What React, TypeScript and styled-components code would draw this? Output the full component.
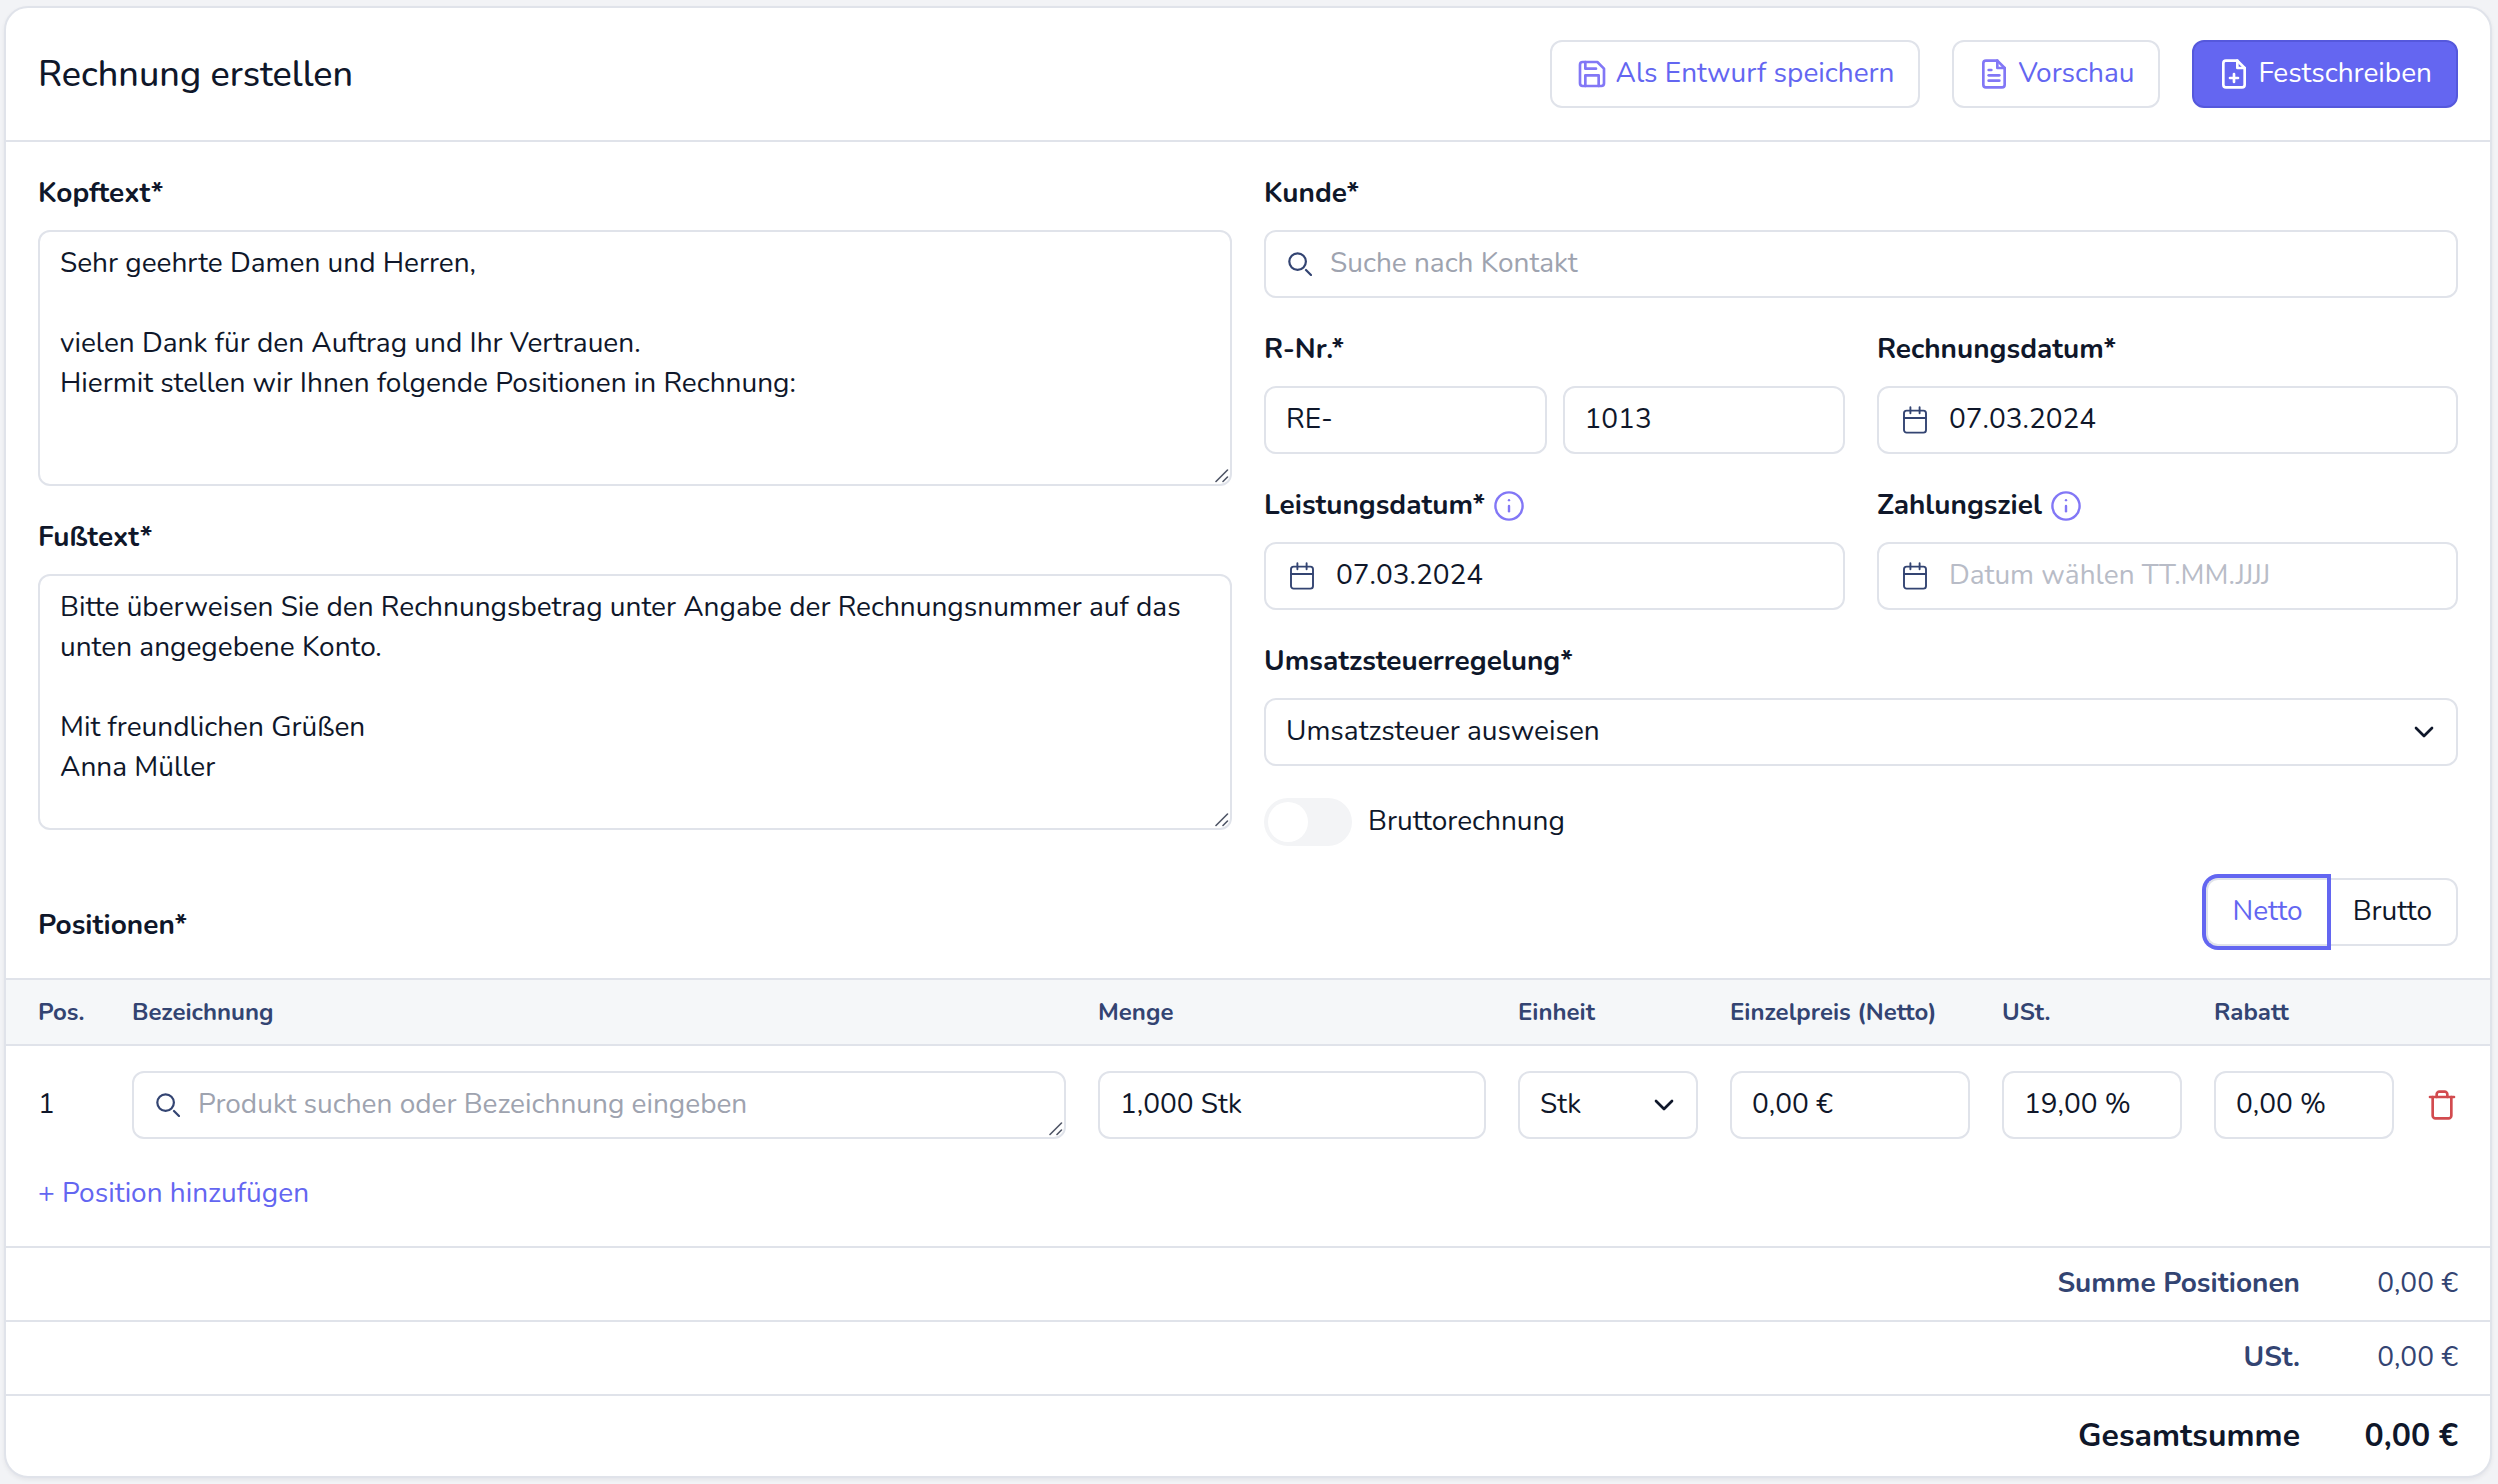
import React, { useState } from "react";
import styled, { createGlobalStyle, css } from "styled-components";

const ink = "#0f172a";
const navy = "#334472";
const line = "#e0e3ea";
const brand = "#6366f1";
const violet = "#8277f6";

const GlobalStyle = createGlobalStyle`
  *, *::before, *::after { box-sizing: border-box; }
  body {
    margin: 0;
    background: #f2f3f6;
    color: ${ink};
    font-family: Nunito, Lato, "Open Sans", sans-serif;
    font-size: 28px;
    line-height: 40px;
  }
  button, input, textarea, select { font: inherit; color: inherit; }
`;

/* ---------- Icons ---------- */

const Svg = styled.svg`
  display: block;
  flex: none;
  fill: none;
  stroke: currentColor;
  stroke-linecap: round;
  stroke-linejoin: round;
`;

const Icon24 = ({ children, stroke = 2 }: { children: React.ReactNode; stroke?: number }) => (
  <Svg width="32" height="32" viewBox="0 0 24 24" strokeWidth={stroke} aria-hidden="true">
    {children}
  </Svg>
);

const SaveIcon = () => (
  <Icon24>
    <path d="M19 21H5a2 2 0 0 1-2-2V5a2 2 0 0 1 2-2h11l5 5v11a2 2 0 0 1-2 2z" />
    <path d="M17 21v-8H7v8" />
    <path d="M7 3v5h8" />
  </Icon24>
);

const FileOutline = () => (
  <>
    <path d="M14.5 2H6a2 2 0 0 0-2 2v16a2 2 0 0 0 2 2h12a2 2 0 0 0 2-2V7.5L14.5 2z" />
    <path d="M14.5 2v5.5H20" />
  </>
);

const FileTextIcon = () => (
  <Icon24>
    <FileOutline />
    <path d="M16 13H8" />
    <path d="M16 17H8" />
    <path d="M10 9H8" />
  </Icon24>
);

const FilePlusIcon = () => (
  <Icon24>
    <FileOutline />
    <path d="M12 12v6" />
    <path d="M9 15h6" />
  </Icon24>
);

const InfoIcon = () => (
  <Icon24 stroke={1.8}>
    <circle cx="12" cy="12" r="10.2" />
    <path d="M12 12v4" />
    <path d="M12 7.6h.01" />
  </Icon24>
);

const ChevronIcon = () => (
  <Icon24>
    <path d="m6 9 6 6 6-6" />
  </Icon24>
);

const TrashIcon = () => (
  <Icon24>
    <path d="M3 6h18" />
    <path d="M19 6v14c0 1-1 2-2 2H7c-1 0-2-1-2-2V6" />
    <path d="M8 6V4c0-1 1-2 2-2h4c1 0 2 1 2 2v2" />
  </Icon24>
);

const SearchIcon = () => (
  <Svg width="24" height="24" viewBox="0 0 24 24" strokeWidth="2.2" aria-hidden="true">
    <circle cx="9.6" cy="9.6" r="8.3" />
    <path d="M18 18l5 5" />
  </Svg>
);

const CalendarIcon = () => (
  <Svg width="24" height="28" viewBox="0 0 24 28" strokeWidth="1.9" aria-hidden="true">
    <rect x="1" y="4.6" width="22" height="22" rx="2.6" />
    <path d="M1 12h22" />
    <path d="M7.4 1.2v6M16.6 1.2v6" />
  </Svg>
);

const gripIcon =
  "data:image/svg+xml,%3Csvg xmlns='http://www.w3.org/2000/svg' width='15' height='15' fill='none' stroke='%23505667' stroke-width='1.6' stroke-linecap='round'%3E%3Cpath d='M1 12.5L12.5 1M8 12.5L12.5 8'/%3E%3C/svg%3E";

/* ---------- Shell ---------- */

const Page = styled.main`
  padding: 6px 6px 6px 4px;
`;

const Card = styled.form`
  overflow: hidden;
  background: #fff;
  border: 2px solid ${line};
  border-radius: 24px;
  box-shadow: 0 2px 4px rgba(15, 23, 42, 0.06);
`;

const Header = styled.header`
  display: flex;
  align-items: center;
  justify-content: space-between;
  padding: 32px;
  border-bottom: 2px solid ${line};
`;

const Title = styled.h1`
  margin: 0;
  padding-top: 2px;
  font-size: 36px;
  line-height: 48px;
  font-weight: 500;
`;

const Actions = styled.div`
  display: flex;
  gap: 32px;
`;

const textPadding = css`
  padding: 11px 20px 13px;
`;

const box = css`
  border: 2px solid ${line};
  border-radius: 12px;
  background: #fff;
`;

const Button = styled.button<{ $primary?: boolean }>`
  display: inline-flex;
  align-items: center;
  gap: 8px;
  height: 68px;
  padding: 0 24px;
  ${box}
  color: ${violet};
  cursor: pointer;
  ${(p) =>
    p.$primary &&
    css`
      background: #6466f1;
      border-color: #5558dc;
      color: #fff;
    `}
`;

const ButtonText = styled.span<{ $primary?: boolean }>`
  padding-bottom: 2px;
  color: ${(p) => (p.$primary ? "#fff" : brand)};
`;

/* ---------- Form ---------- */

const FormGrid = styled.div`
  display: grid;
  grid-template-columns: 1fr 1fr;
  gap: 32px;
  padding: 32px 32px 0;
`;

const Column = styled.div`
  display: flex;
  flex-direction: column;
  gap: 32px;
`;

const Pair = styled.div`
  display: grid;
  grid-template-columns: 1fr 1fr;
  gap: 32px;
`;

const Field = styled.div`
  display: flex;
  flex-direction: column;
  gap: 16px;
  min-width: 0;
`;

const LabelRow = styled.div`
  display: flex;
  align-items: center;
  gap: 8px;
  height: 40px;
`;

const Label = styled.label`
  padding-bottom: 2px;
  font-weight: 700;
`;

const InfoButton = styled.button`
  padding: 0;
  border: 0;
  background: none;
  color: ${violet};
  cursor: help;
`;

const Input = styled.input<{ $pad?: number; $faint?: boolean }>`
  display: block;
  width: 100%;
  min-width: 0;
  height: 68px;
  ${box}
  ${textPadding}
  padding-left: ${(p) => p.$pad ?? 20}px;
  &::placeholder {
    color: ${(p) => (p.$faint ? "#b8bcc7" : "#9ea3af")};
    opacity: 1;
  }
`;

const TextArea = styled.textarea<{ $compact?: boolean }>`
  display: block;
  width: 100%;
  height: ${(p) => (p.$compact ? 68 : 256)}px;
  ${box}
  ${textPadding}
  padding-left: ${(p) => (p.$compact ? 64 : 20)}px;
  resize: vertical;
  overflow: hidden;
  &::-webkit-resizer {
    background: url("${gripIcon}") no-repeat right bottom;
  }
  &::placeholder {
    color: #9ea3af;
    opacity: 1;
  }
`;

const Adorned = styled.div`
  position: relative;
`;

const Adornment = styled.span<{ $left: number }>`
  position: absolute;
  top: 0;
  bottom: 0;
  left: ${(p) => p.$left}px;
  display: flex;
  align-items: center;
  color: ${navy};
  pointer-events: none;
`;

const NumberPair = styled.div`
  display: grid;
  grid-template-columns: 1fr 1fr;
  gap: 16px;
`;

const SelectBox = styled.select`
  display: block;
  width: 100%;
  height: 68px;
  appearance: none;
  ${box}
  ${textPadding}
`;

const SelectArrow = styled.span`
  position: absolute;
  top: 0;
  bottom: 0;
  right: 18px;
  display: flex;
  align-items: center;
  pointer-events: none;
`;

const SwitchRow = styled.div`
  display: flex;
  align-items: center;
  gap: 16px;
  height: 48px;
`;

const SwitchInput = styled.input`
  appearance: none;
  display: flex;
  align-items: center;
  width: 88px;
  height: 48px;
  margin: 0;
  padding: 4px;
  border-radius: 24px;
  background: #f3f4f6;
  cursor: pointer;
  &::before {
    content: "";
    width: 40px;
    height: 40px;
    border-radius: 50%;
    background: #fff;
  }
  &:checked {
    justify-content: flex-end;
    background: ${brand};
  }
`;

const SwitchLabel = styled.label`
  padding-bottom: 2px;
`;

/* ---------- Positions ---------- */

const PositionsBar = styled.div`
  display: flex;
  align-items: flex-end;
  justify-content: space-between;
  padding: 32px;
`;

const SectionTitle = styled.h2`
  margin: 0;
  padding-bottom: 1px;
  font-size: 28px;
  line-height: 40px;
  font-weight: 700;
`;

const Segments = styled.div`
  display: flex;
`;

const Segment = styled.button<{ $first?: boolean }>`
  height: 68px;
  border: 2px solid ${line};
  border-radius: ${(p) => (p.$first ? "12px 0 0 12px" : "0 12px 12px 0")};
  ${(p) => p.$first && "border-right-width: 0;"}
  background: #fff;
  padding: 0 24px 2px;
  cursor: pointer;
  &[aria-pressed="true"] {
    position: relative;
    color: ${brand};
    box-shadow: 0 0 0 4px ${brand};
  }
`;

const Table = styled.table`
  width: 100%;
  table-layout: fixed;
  border-collapse: separate;
  border-spacing: 0;
`;

const Col = styled.col<{ $w?: number }>`
  width: ${(p) => (p.$w ? `${p.$w}px` : "auto")};
`;

const Th = styled.th`
  padding: 16px;
  border: solid ${line};
  border-width: 2px 0;
  background: #f5f7f9;
  color: ${navy};
  font-size: 24px;
  line-height: 32px;
  font-weight: 700;
  text-align: left;
  white-space: nowrap;
  &:first-child { padding-left: 32px; }
`;

const Td = styled.td`
  padding: 25px 16px 24px;
  &:first-child { padding: 24px 16px 26px 32px; }
  &:last-child { padding-right: 32px; }
`;

const DeleteButton = styled.button`
  display: block;
  padding: 0;
  border: 0;
  background: none;
  color: #d24b4f;
  cursor: pointer;
`;

const AddRow = styled.div`
  padding: 10px 32px 33px;
`;

const AddButton = styled.button`
  display: block;
  padding: 0;
  border: 0;
  background: none;
  color: ${brand};
  cursor: pointer;
`;

/* ---------- Totals ---------- */

const Totals = styled.dl`
  margin: 0;
`;

const TotalRow = styled.div<{ $grand?: boolean }>`
  display: flex;
  justify-content: flex-end;
  padding: ${(p) => (p.$grand ? "16px 32px" : "15px 32px 17px")};
  border-top: 2px solid ${line};
  color: ${(p) => (p.$grand ? ink : navy)};
  font-size: ${(p) => (p.$grand ? 32 : 28)}px;
  line-height: ${(p) => (p.$grand ? 48 : 40)}px;
  font-weight: ${(p) => (p.$grand ? 700 : 400)};
`;

const TotalName = styled.dt`
  font-weight: 700;
`;

const TotalValue = styled.dd`
  width: 158px;
  margin: 0;
  text-align: right;
`;

const headText =
  "Sehr geehrte Damen und Herren,\n\nvielen Dank für den Auftrag und Ihr Vertrauen.\nHiermit stellen wir Ihnen folgende Positionen in Rechnung:";
const footText =
  "Bitte überweisen Sie den Rechnungsbetrag unter Angabe der Rechnungsnummer auf das unten angegebene Konto.\n\nMit freundlichen Grüßen\nAnna Müller";

type DateFieldProps = { id: string; label: string; value?: string; info?: boolean };

const DateField = ({ id, label, value, info }: DateFieldProps) => (
  <Field>
    <LabelRow>
      <Label htmlFor={id}>{label}</Label>
      {info && (
        <InfoButton type="button" aria-label={`Hinweis zu ${label.replace("*", "")}`}>
          <InfoIcon />
        </InfoButton>
      )}
    </LabelRow>
    <Adorned>
      <Adornment $left={26}>
        <CalendarIcon />
      </Adornment>
      <Input id={id} $pad={70} $faint defaultValue={value} placeholder="Datum wählen TT.MM.JJJJ" />
    </Adorned>
  </Field>
);

export default function App() {
  const [mode, setMode] = useState<"Netto" | "Brutto">("Netto");

  return (
    <Page>
      <GlobalStyle />
      <Card onSubmit={(e) => e.preventDefault()}>
        <Header>
          <Title>Rechnung erstellen</Title>
          <Actions>
            <Button type="button">
              <SaveIcon />
              <ButtonText>Als Entwurf speichern</ButtonText>
            </Button>
            <Button type="button">
              <FileTextIcon />
              <ButtonText>Vorschau</ButtonText>
            </Button>
            <Button type="submit" $primary>
              <FilePlusIcon />
              <ButtonText $primary>Festschreiben</ButtonText>
            </Button>
          </Actions>
        </Header>

        <FormGrid>
          <Column>
            <Field>
              <LabelRow>
                <Label htmlFor="head">Kopftext*</Label>
              </LabelRow>
              <TextArea id="head" defaultValue={headText} spellCheck={false} />
            </Field>
            <Field>
              <LabelRow>
                <Label htmlFor="foot">Fußtext*</Label>
              </LabelRow>
              <TextArea id="foot" defaultValue={footText} spellCheck={false} />
            </Field>
          </Column>

          <Column>
            <Field>
              <LabelRow>
                <Label htmlFor="customer">Kunde*</Label>
              </LabelRow>
              <Adorned>
                <Adornment $left={24}>
                  <SearchIcon />
                </Adornment>
                <Input id="customer" $pad={64} placeholder="Suche nach Kontakt" />
              </Adorned>
            </Field>
            <Pair>
              <Field>
                <LabelRow>
                  <Label htmlFor="prefix">R-Nr.*</Label>
                </LabelRow>
                <NumberPair>
                  <Input id="prefix" defaultValue="RE-" />
                  <Input aria-label="Laufende Nummer" defaultValue="1013" />
                </NumberPair>
              </Field>
              <DateField id="invoice-date" label="Rechnungsdatum*" value="07.03.2024" />
            </Pair>
            <Pair>
              <DateField id="service-date" label="Leistungsdatum*" value="07.03.2024" info />
              <DateField id="due-date" label="Zahlungsziel" info />
            </Pair>
            <Field>
              <LabelRow>
                <Label htmlFor="vat-rule">Umsatzsteuerregelung*</Label>
              </LabelRow>
              <Adorned>
                <SelectBox id="vat-rule">
                  <option>Umsatzsteuer ausweisen</option>
                </SelectBox>
                <SelectArrow>
                  <ChevronIcon />
                </SelectArrow>
              </Adorned>
            </Field>
            <SwitchRow>
              <SwitchInput id="gross" type="checkbox" role="switch" />
              <SwitchLabel htmlFor="gross">Bruttorechnung</SwitchLabel>
            </SwitchRow>
          </Column>
        </FormGrid>

        <PositionsBar>
          <SectionTitle>Positionen*</SectionTitle>
          <Segments>
            <Segment type="button" $first aria-pressed={mode === "Netto"} onClick={() => setMode("Netto")}>
              Netto
            </Segment>
            <Segment type="button" aria-pressed={mode === "Brutto"} onClick={() => setMode("Brutto")}>
              Brutto
            </Segment>
          </Segments>
        </PositionsBar>

        <Table>
          <colgroup>
            <Col $w={110} />
            <Col />
            <Col $w={420} />
            <Col $w={212} />
            <Col $w={272} />
            <Col $w={212} />
            <Col $w={212} />
            <Col $w={80} />
          </colgroup>
          <thead>
            <tr>
              <Th>Pos.</Th>
              <Th>Bezeichnung</Th>
              <Th>Menge</Th>
              <Th>Einheit</Th>
              <Th>Einzelpreis ({mode})</Th>
              <Th>USt.</Th>
              <Th>Rabatt</Th>
              <Th aria-label="Aktionen" />
            </tr>
          </thead>
          <tbody>
            <tr>
              <Td>1</Td>
              <Td>
                <Adorned>
                  <Adornment $left={24}>
                    <SearchIcon />
                  </Adornment>
                  <TextArea $compact aria-label="Bezeichnung" placeholder="Produkt suchen oder Bezeichnung eingeben" />
                </Adorned>
              </Td>
              <Td>
                <Input aria-label="Menge" defaultValue="1,000 Stk" />
              </Td>
              <Td>
                <Adorned>
                  <SelectBox aria-label="Einheit">
                    <option>Stk</option>
                  </SelectBox>
                  <SelectArrow>
                    <ChevronIcon />
                  </SelectArrow>
                </Adorned>
              </Td>
              <Td>
                <Input aria-label="Einzelpreis" defaultValue="0,00 €" />
              </Td>
              <Td>
                <Input aria-label="USt." defaultValue="19,00 %" />
              </Td>
              <Td>
                <Input aria-label="Rabatt" defaultValue="0,00 %" />
              </Td>
              <Td>
                <DeleteButton type="button" aria-label="Position löschen">
                  <TrashIcon />
                </DeleteButton>
              </Td>
            </tr>
          </tbody>
        </Table>

        <AddRow>
          <AddButton type="button">+ Position hinzufügen</AddButton>
        </AddRow>

        <Totals>
          <TotalRow>
            <TotalName>Summe Positionen</TotalName>
            <TotalValue>0,00 €</TotalValue>
          </TotalRow>
          <TotalRow>
            <TotalName>USt.</TotalName>
            <TotalValue>0,00 €</TotalValue>
          </TotalRow>
          <TotalRow $grand>
            <TotalName>Gesamtsumme</TotalName>
            <TotalValue>0,00 €</TotalValue>
          </TotalRow>
        </Totals>
      </Card>
    </Page>
  );
}
